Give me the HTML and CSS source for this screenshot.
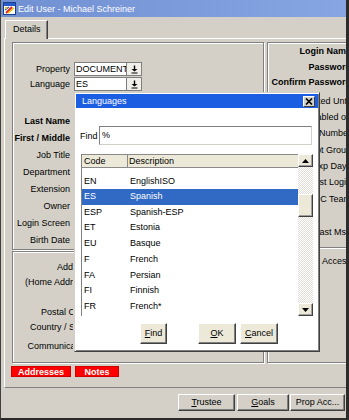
FILE: index.html
```html
<!DOCTYPE html>
<html>
<head>
<meta charset="utf-8">
<link rel="stylesheet" href="styles.css">
</head>
<body>
<div class="window">
  <div class="titlebar">
    <svg class="appicon" width="13" height="13" viewBox="0 0 13 13">
      <rect x="0.5" y="0.5" width="12" height="12" fill="#fff" stroke="#1b3f8f"/>
      <rect x="1" y="1" width="11" height="3" fill="#2a5bc8"/>
      <path d="M3 11 L9 5" stroke="#e02020" stroke-width="2"/>
      <path d="M5 11 L11 6" stroke="#f2c200" stroke-width="1.5"/>
      <path d="M2 8 L6 5" stroke="#2a5bc8" stroke-width="1.2"/>
      <rect x="2" y="5" width="2" height="2" fill="#f2c200"/>
    </svg>
    <span class="ttext">Edit User - Michael Schreiner</span>
  </div>
  <div class="tabs"><div class="tab">Details</div></div>
  <div class="panel">
    <div class="groups">
      <div class="leftcol">
        <div class="group g1">
          <div class="ftop">
            <div class="lbl">Property</div>
            <div class="combo"><div class="inp">DOCUMENT</div><div class="dd"><svg width="9" height="9" viewBox="0 0 9 9"><path d="M4.5 0.5 V5" stroke="#000" stroke-width="1.4"/><path d="M1.5 4 L4.5 6.5 L7.5 4 Z" fill="#000"/><path d="M1.5 8 H7.5" stroke="#000" stroke-width="1"/></svg></div></div>
            <div class="lbl">Language</div>
            <div class="combo"><div class="inp">ES</div><div class="dd"><svg width="9" height="9" viewBox="0 0 9 9"><path d="M4.5 0.5 V5" stroke="#000" stroke-width="1.4"/><path d="M1.5 4 L4.5 6.5 L7.5 4 Z" fill="#000"/><path d="M1.5 8 H7.5" stroke="#000" stroke-width="1"/></svg></div></div>
          </div>
          <div class="flist">
            <div class="lbl b">Last Name</div>
            <div class="lbl b">First / Middle</div>
            <div class="lbl">Job Title</div>
            <div class="lbl">Department</div>
            <div class="lbl">Extension</div>
            <div class="lbl">Owner</div>
            <div class="lbl">Login Screen</div>
            <div class="lbl">Birth Date</div>
          </div>
        </div>
        <div class="group g2">
          <div class="g2clip">
            <div class="lbl2">Address</div>
            <div class="lbl2">(Home Address)</div>
            <div class="lbl2 postal">Postal Code</div>
            <div class="lbl2">Country / State</div>
            <div class="lbl2 comm">Communication</div>
          </div>
        </div>
      </div>
      <div class="group gr">
        <div class="rtop">
          <div class="rl b">Login Name</div>
          <div class="rl b">Password</div>
          <div class="rl b">Confirm Password</div>
        </div>
        <div class="rclip">
          <div class="rl2">Locked Until</div>
          <div class="rl2">Enabled on</div>
          <div class="rl2">ID Number</div>
          <div class="rl2">Dept Group</div>
          <div class="rl2">Exp Days</div>
          <div class="rl2">Last Login</div>
          <div class="rl2">PC Team</div>
          <div class="rl2"></div>
          <div class="rl2">Last Msg</div>
        </div>
        <div class="sep"></div>
        <div class="rclip access"><div class="rl3">Access</div></div>
      </div>
    </div>
    <div class="redbtns"><div class="red w1">Addresses</div><div class="red w2">Notes</div></div>
  </div>
  <div class="bottombar">
    <div class="btn bt1"><u>T</u>rustee</div>
    <div class="btn bt2"><u>G</u>oals</div>
    <div class="btn bt3">Prop Acc...</div>
  </div>

  <div class="dialog">
    <div class="dtitle"><span>Languages</span><div class="close"><svg width="8" height="7" viewBox="0 0 8 7"><path d="M1 0.5 L7 6.5 M7 0.5 L1 6.5" stroke="#000" stroke-width="1.6"/></svg></div></div>
    <div class="findrow"><span class="flbl">Find</span><div class="finp">%</div></div>
    <div class="grid">
      <div class="list">
        <div class="ghead"><div class="h1">Code</div><div class="h2">Description</div></div>
        <div class="spacer"></div>
        <div class="row first"><div class="c1">EN</div><div class="c2">EnglishISO</div></div>
        <div class="row sel"><div class="c1">ES</div><div class="c2">Spanish</div></div>
        <div class="row"><div class="c1">ESP</div><div class="c2">Spanish-ESP</div></div>
        <div class="row"><div class="c1">ET</div><div class="c2">Estonia</div></div>
        <div class="row"><div class="c1">EU</div><div class="c2">Basque</div></div>
        <div class="row"><div class="c1">F</div><div class="c2">French</div></div>
        <div class="row"><div class="c1">FA</div><div class="c2">Persian</div></div>
        <div class="row"><div class="c1">FI</div><div class="c2">Finnish</div></div>
        <div class="row"><div class="c1">FR</div><div class="c2">French*</div></div>
      </div>
      <div class="sb">
        <div class="sbb"><svg width="7" height="4" viewBox="0 0 7 4"><path d="M0 4 L3.5 0 L7 4 Z" fill="#000"/></svg></div>
        <div class="thumb"></div>
        <div class="sbfill"></div>
        <div class="sbb"><svg width="7" height="4" viewBox="0 0 7 4"><path d="M0 0 L3.5 4 L7 0 Z" fill="#000"/></svg></div>
      </div>
    </div>
    <div class="dbtns">
      <div class="dbtn df"><u>F</u>ind</div>
      <div class="dbtn dok"><u>O</u>K</div>
      <div class="dbtn dc"><u>C</u>ancel</div>
    </div>
  </div>
</div>
</body>
</html>
```
FILE: styles.css
```css
* { box-sizing: border-box; }
body { margin: 0; font-family: "Liberation Sans", Arial, sans-serif; font-size: 9px; color: #000; }

.window {
  width: 349px; height: 420px; position: relative; overflow: hidden;
  background: #d4d0c8;
  border-left: 1px solid #404040; border-right: 3px solid #2b2b2b; border-bottom: 2px solid #2b2b2b;
  display: flex; flex-direction: column;
}

.titlebar {
  flex: none; height: 17px; display: flex; align-items: center; gap: 2px; padding-left: 2px;
  background: linear-gradient(90deg, #7090d2, #86a5e2);
  color: #fff; white-space: nowrap; font-size: 9px;
}
.appicon { flex: none; }

.tabs { flex: none; height: 21px; padding: 3px 0 0 4px; display: flex; }
.tab {
  width: 43px; height: 19px; background: #d4d0c8; position: relative; z-index: 1;
  border-top: 1px solid #fff; border-left: 1px solid #fff; border-right: 1px solid #404040;
  box-shadow: inset -1px 0 #808080; padding-left: 7px; line-height: 17px; margin-bottom: -1px;
}

.panel {
  flex: none; height: 350px; margin-left: 3px; margin-right: -30px;
  border-top: 1px solid #fff; border-left: 1px solid #fff; border-bottom: 1px solid #808080;
  padding: 3px 0 0 7px;
}
.groups { display: flex; gap: 3px; }
.leftcol { width: 252px; flex: none; }
.group { border: 1px solid #808080; box-shadow: inset 1px 1px #fff, 1px 1px #fff; }
.g1 { height: 208px; }
.g2 { height: 112px; margin-top: 1px; padding-top: 8px; }
.gr { width: 110px; height: 321px; }

.ftop { display: grid; grid-template-columns: 57px 68px; column-gap: 4px; row-gap: 1px; margin-top: 19px; }
.lbl { text-align: right; white-space: nowrap; line-height: 14px; }
.b { font-weight: bold; }
.combo { display: flex; height: 14px; }
.inp {
  width: 53px; background: #fff; border: 1px solid #7f7f7f; padding-left: 1px;
  line-height: 12px; overflow: hidden; white-space: nowrap;
}
.dd {
  width: 15px; background: #f0efea; border: 1px solid #7f7f7f; border-left: none;
  display: flex; align-items: center; justify-content: center;
}
.flist { margin-top: 22px; width: 57px; }
.flist .lbl { line-height: 17px; }

.g2clip { width: 60px; overflow: hidden; }
.lbl2 { width: 77px; text-align: right; white-space: nowrap; line-height: 15px; }
.postal { margin-top: 15px; }
.comm { margin-top: 4px; }

.rtop { padding-top: 1px; }
.rl { width: 83px; text-align: right; white-space: nowrap; direction: rtl; line-height: 15.5px; }
.rclip { margin-left: 52px; width: 31px; overflow: hidden; margin-top: 2px; }
.rl2 {
  height: 16.4px; line-height: 16.4px; text-align: right; white-space: nowrap; direction: rtl;
}
.sep { margin-top: 7px; height: 2px; border-top: 1px solid #808080; border-bottom: 1px solid #fff; }
.access { margin-top: 4px; }
.rl3 { line-height: 16px; text-align: right; white-space: nowrap; direction: rtl; }

.redbtns { display: flex; gap: 4px; margin-top: 3px; margin-left: -1px; }
.red {
  height: 11px; background: #f00; color: #fff; font-weight: bold; text-align: center;
  line-height: 10px; border: 1px solid #d00000;
}
.w1 { width: 60px; }
.w2 { width: 44px; }

.bottombar { flex: 1; display: flex; justify-content: flex-end; align-items: flex-start; padding: 6px 1px 0 0; }
.btn {
  height: 17px; background: #d4d0c8; text-align: center; line-height: 15px;
  border: 1px solid; border-color: #fff #404040 #404040 #fff; box-shadow: inset -1px -1px #808080;
}
.bt1 { width: 57px; }
.bt2 { width: 52px; margin-left: 2px; }
.bt3 { width: 55px; margin-left: 1px; }

.dialog {
  position: absolute; left: 73px; top: 92px; width: 246px; height: 260px; background: #fff;
  border: 1px solid; border-color: #d4d0c8 #404040 #404040 #d4d0c8;
  box-shadow: inset 1px 1px #fff, inset -1px -1px #808080;
  padding: 1px; display: flex; flex-direction: column; z-index: 5;
}
.dtitle {
  flex: none; height: 14px; background: #1c5ee2; color: #fff;
  display: flex; align-items: center; justify-content: space-between; padding: 0 3px 0 6px;
}
.close {
  width: 12px; height: 11px; background: #d4d0c8;
  border: 1px solid; border-color: #fff #404040 #404040 #fff;
  display: flex; align-items: center; justify-content: center;
}
.findrow { flex: none; display: flex; align-items: center; height: 19px; margin-top: 18px; padding: 0 6px 0 4px; }
.flbl { width: 19px; flex: none; }
.finp {
  flex: 1; height: 19px; border: 1px solid; border-color: #808080 #d4d0c8 #d4d0c8 #808080;
  padding-left: 2px; line-height: 17px;
}
.grid { flex: none; height: 162px; margin: 9px 5px 0 5px; display: flex; border-left: 1px solid #808080; }
.list { flex: 1; overflow: hidden; }
.ghead {
  display: flex; height: 14px; background: #ece9d8; line-height: 12px;
  border-top: 1px solid #8a8a8a; border-bottom: 1px solid #8a8a8a;
}
.h1 { width: 46px; padding-left: 2px; border-right: 1px solid #8a8a8a; }
.h2 { padding-left: 1px; }
.spacer { height: 7px; }
.row { display: flex; height: 15.75px; line-height: 15.75px; }
.row.first { height: 13.75px; line-height: 13.75px; }
.c1 { width: 46px; padding-left: 2px; }
.c2 { padding-left: 2px; }
.sel { background: #316ac5; color: #fff; }

.sb {
  width: 15px; flex: none; display: flex; flex-direction: column;
  background-color: #fff;
  background-image: conic-gradient(#e2dfd8 90deg, #fff 90deg 180deg, #e2dfd8 180deg 270deg, #fff 270deg);
  background-size: 2px 2px;
}
.sbb, .thumb {
  background: #ece9d8; border: 1px solid; border-color: #fff #404040 #404040 #fff;
  box-shadow: inset -1px -1px #a0a0a0;
}
.sbb { height: 13px; display: flex; align-items: center; justify-content: center; }
.thumb { height: 23px; margin-top: 27px; }
.sbfill { flex: 1; }

.dbtns { flex: none; display: flex; margin-top: 7px; padding-left: 64px; }
.dbtn {
  height: 21px; background: #ece9d8; text-align: center; line-height: 19px;
  border: 1px solid; border-color: #fff #404040 #404040 #fff; box-shadow: inset -1px -1px #808080;
}
.df { width: 27px; }
.dok { width: 38px; margin-left: 31px; }
.dc { width: 38px; margin-left: 4px; }
```
